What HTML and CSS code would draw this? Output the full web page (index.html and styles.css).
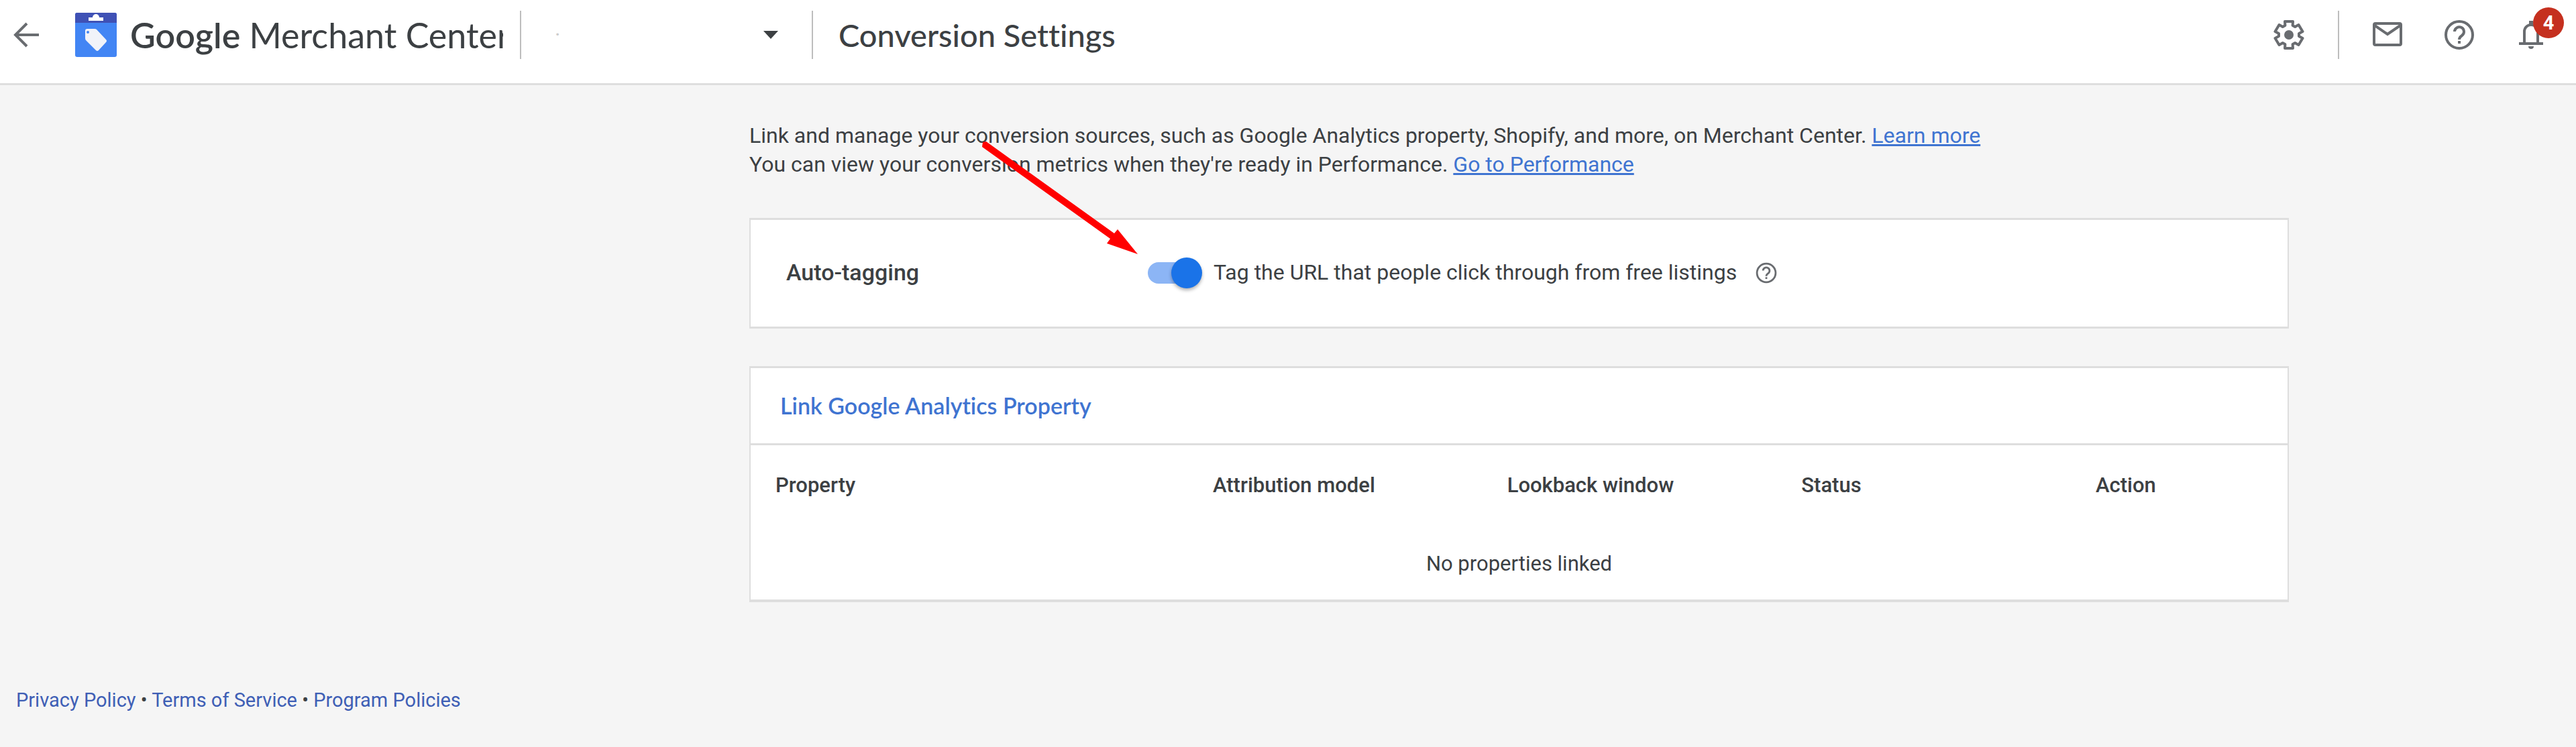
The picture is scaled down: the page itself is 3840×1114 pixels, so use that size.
FILE: index.html
```html
<!DOCTYPE html>
<html lang="en">
<head>
  <meta charset="UTF-8" />
  <meta name="viewport" content="width=device-width, initial-scale=1.0" />
  <title>Conversion Settings - Google Merchant Center</title>
  <link rel="stylesheet" href="styles.css">
</head>
<body>

  <header class="topbar">
    <button class="icon-button back" type="button" aria-label="Back">
      <svg width="40" height="40" viewBox="0 0 40 40">
        <path d="M38 20H4M20 3L3 20l17 17" fill="none" stroke="currentColor" stroke-width="4" />
      </svg>
    </button>
    <a class="brand" href="#">
      <svg class="logo" width="62" height="66" viewBox="0 0 62 66">
        <rect width="62" height="66" rx="3" fill="#4285f4" />
        <path d="M3 0h56a3 3 0 0 1 3 3v12H0V3a3 3 0 0 1 3-3z" fill="#3f51b5" />
        <path d="M20 7h6a5 5 0 0 1 10 0h6v5H20z" fill="#fff" />
        <path d="M18 24h11q2 0 3 1l14 15q2 2 0 4L35 56q-2 2-4 0L16 41q-1-1-1-3V27q0-3 3-3z" fill="#f1f3f9" />
        <circle cx="19" cy="29" r="2" fill="#4285f4" />
      </svg>
      <span class="brand-name"><span class="brand-google">Google</span> Merchant Center</span>
    </a>
    <button class="account" type="button" aria-label="Select account">
      <span class="account-name">·</span>
      <svg width="22" height="12" viewBox="0 0 22 12"><path d="M0 0h22L11 12z" fill="currentColor" /></svg>
    </button>
    <h1 class="page-title">Conversion Settings</h1>

    <nav class="tools">
      <button class="icon-button settings" type="button" aria-label="Settings">
        <svg width="46" height="46" viewBox="0 0 46 46" fill="none" stroke="currentColor" stroke-width="4" stroke-linejoin="round">
          <path d="M17 3h12l-.4 6 3.600 2L37.500 8l6 10L38 21v4l5.500 3-6 10-5.300-3-3.600 2 .4 6H17l.4-6-3.600-2-5.300 3-6-10L8 25v-4l-5.500-3 6-10 5.300 3 3.600-2z" />
          <circle cx="23" cy="23" r="7" fill="currentColor" stroke="none" />
        </svg>
      </button>
      <button class="icon-button" type="button" aria-label="Messages">
        <svg width="46" height="46" viewBox="0 0 46 46" fill="none" stroke="currentColor" stroke-width="4">
          <rect x="3" y="6" width="40" height="32" rx="2" />
          <path d="M4 9l19 13L42 9" />
        </svg>
      </button>
      <button class="icon-button" type="button" aria-label="Help">
        <svg width="46" height="46" viewBox="0 0 46 46" fill="none" stroke="currentColor" stroke-width="4">
          <circle cx="23" cy="23" r="20" />
          <path d="M16 18a7 7 0 1 1 11 6c-3 2-4 3-4 6" />
          <path d="M21 34h4" />
        </svg>
      </button>
      <button class="icon-button" type="button" aria-label="Notifications">
        <svg width="46" height="46" viewBox="0 0 46 46" fill="none" stroke="currentColor" stroke-width="4">
          <path d="M13 36V18a10 10 0 0 1 20 0v18M5 36h36" />
          <path d="M23 2v6" stroke-width="6" />
          <path d="M19 40h8a4 4 0 0 1-8 0z" fill="currentColor" stroke="none" />
        </svg>
        <span class="badge">4</span>
      </button>
    </nav>
  </header>

  <main class="content">
    <p class="intro">
      Link and manage your conversion sources, such as Google Analytics property, Shopify, and more, on Merchant Center. <a href="#">Learn more</a><br>
      You can view your conversion metrics when they're ready in Performance. <a href="#">Go to Performance</a>
    </p>

    <section class="card tagging">
      <h2 class="tagging-title">Auto-tagging</h2>
      <label class="tagging-option">
        <input class="toggle" type="checkbox" role="switch" checked>
        Tag the URL that people click through from free listings
      </label>
      <button class="icon-button hint" type="button" aria-label="About auto-tagging">
        <svg width="32" height="32" viewBox="0 0 46 46" fill="none" stroke="currentColor" stroke-width="4">
          <circle cx="23" cy="23" r="20" />
          <path d="M16 18a7 7 0 1 1 11 6c-3 2-4 3-4 6" />
          <path d="M21 34h4" />
        </svg>
      </button>
    </section>

    <section class="card properties">
      <div class="properties-bar">
        <button class="link-button" type="button">Link Google Analytics Property</button>
      </div>
      <table class="properties-table">
        <thead>
          <tr>
            <th class="col-property">Property</th>
            <th>Attribution model</th>
            <th>Lookback window</th>
            <th>Status</th>
            <th class="col-action">Action</th>
          </tr>
        </thead>
        <tbody>
          <tr>
            <td colspan="5">No properties linked</td>
          </tr>
        </tbody>
      </table>
    </section>

    <!-- arrow pointing at the auto-tagging switch -->
    <svg class="pointer" width="240" height="176" viewBox="0 0 240 176">
      <path d="M5 12L6 5l5-1 191 137 5-6 30 37-46-16 5-7z" fill="#f00" />
    </svg>
  </main>

  <footer class="footer">
    <a href="#">Privacy Policy</a> • <a href="#">Terms of Service</a> • <a href="#">Program Policies</a>
  </footer>

</body>
</html>
```

FILE: styles.css
```css
* {
  box-sizing: border-box;
}

body {
  margin: 0;
  min-height: 100vh;
  background: #f5f5f5;
  color: #3c4043;
  font-family: Roboto, "Liberation Sans", sans-serif;
  font-size: 32px;
  font-variant-ligatures: none;
  line-height: 43px;
}

button {
  padding: 0;
  border: 0;
  background: none;
  font: inherit;
  font-variant-ligatures: none;
  color: inherit;
  cursor: pointer;
}

svg {
  display: block;
}

/* top bar */
.topbar {
  display: flex;
  align-items: center;
  height: 127px;
  padding: 0 44px 20px 20px;
  background: #fff;
  border-bottom: 3px solid #dedede;
}

.icon-button {
  position: relative;
  color: #696c70;
}

.brand {
  display: flex;
  align-items: center;
  gap: 20px;
  margin-left: 52px;
  color: #3c4043;
  text-decoration: none;
}

.brand-name {
  width: 556px;
  overflow: hidden;
  font-family: Lato, sans-serif;
  font-size: 52px;
  line-height: 72px;
  white-space: nowrap;
}

.brand-google {
  font-weight: 600;
}

.account {
  display: flex;
  align-items: center;
  justify-content: space-between;
  width: 437px;
  height: 72px;
  margin-left: 25px;
  padding: 0 50px;
  border: solid #bdbdbd;
  border-width: 0 2px;
}

.account-name {
  color: #ccc;
}

.page-title {
  margin: 0 0 0 38px;
  font-family: Lato, sans-serif;
  font-size: 47px;
  font-weight: 500;
  line-height: 60px;
}

.tools {
  display: flex;
  align-items: center;
  gap: 61px;
  margin-left: auto;
}

.settings {
  height: 72px;
  padding-right: 50px;
  margin-right: -12px;
  border-right: 2px solid #bdbdbd;
}

.badge {
  position: absolute;
  top: -18px;
  right: -26px;
  width: 46px;
  height: 46px;
  border-radius: 50%;
  background: #c5301f;
  color: #fff;
  font-size: 29px;
  font-weight: 700;
  line-height: 46px;
  text-align: center;
}

/* page content */
.content {
  position: relative;
  padding: 54px 428px 0 1117px;
}

.content a,
.link-button {
  color: #3f74d1;
}

.intro {
  margin: 0 0 58px;
}

.card {
  background: #fff;
  border: solid #dedede;
  border-width: 3px 2px;
}

.tagging {
  display: flex;
  align-items: center;
  height: 165px;
  margin-bottom: 56px;
  padding: 0 53px 2px;
}

.tagging-title {
  width: 539px;
  margin: 0;
  font-size: 34px;
  font-weight: 500;
}

.tagging-option {
  display: flex;
  align-items: center;
  gap: 18px;
}

.toggle {
  position: relative;
  appearance: none;
  width: 80px;
  height: 32px;
  margin: 0;
  border-radius: 16px;
  background: #8cb5f5;
}

.toggle::before {
  content: "";
  position: absolute;
  top: -7px;
  right: -1px;
  width: 46px;
  height: 46px;
  border-radius: 50%;
  background: #1a73e8;
  box-shadow: 0 3px 5px rgba(0, 0, 0, 0.3);
}

.hint {
  margin-left: 28px;
}

.properties {
  border-bottom-width: 4px;
}

.properties-bar {
  padding: 34px 44px 35px;
  border-bottom: 3px solid #dedede;
}

.link-button {
  display: block;
  font-family: Lato, sans-serif;
  font-size: 34px;
  font-weight: 600;
}

.properties-table {
  width: 100%;
  border-collapse: collapse;
  table-layout: fixed;
  font-size: 31px;
}

.properties-table th {
  padding: 38px 0 40px 37px;
  font-weight: 500;
  text-align: left;
}

.properties-table td {
  padding: 34px 0 32px;
  text-align: center;
}

.properties-table .col-property {
  width: 652px;
}

.properties-table .col-action {
  width: 323px;
}

.pointer {
  position: absolute;
  top: 80px;
  left: 1459px;
  pointer-events: none;
}

.footer {
  padding: 125px 24px 40px;
  font-size: 29px;
}

.footer a {
  color: #3f5fb5;
  text-decoration: none;
}
```
